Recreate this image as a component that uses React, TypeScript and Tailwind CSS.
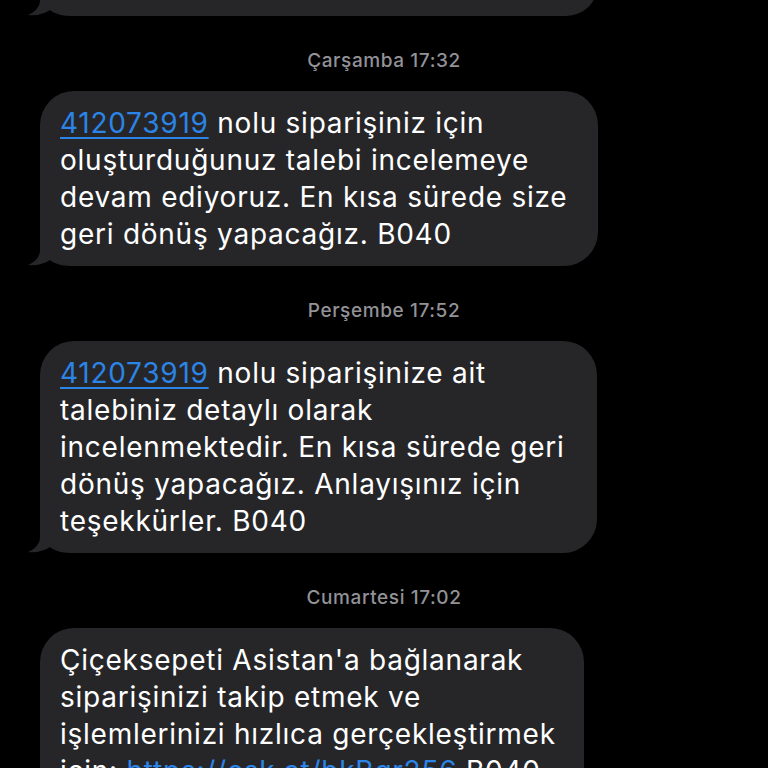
import React from 'react';

const Tail = () => (
  <svg
    className="absolute left-[-12px] bottom-0"
    width="48"
    height="40"
    viewBox="0 0 48 40"
  >
    <path
      d="M12 0 L12 24 C12 31 7 36 0 39 C8 40 16 38 22 34 C28 39 36 40 48 40 L48 0 Z"
      fill="#262629"
    />
  </svg>
);

const Stamp = ({ day, time }: { day: string; time: string }) => (
  <div className="mt-[34px] mb-[19px] text-center text-[19px] font-medium leading-[22px] tracking-[0.6px] text-[#929297]">
    {day} {time}
  </div>
);

const Bubble = ({
  width,
  lines,
  tail = true,
}: {
  width: string;
  lines: React.ReactNode[];
  tail?: boolean;
}) => (
  <div className={`relative ml-[40px] ${width}`}>
    {tail && <Tail />}
    <div className="relative rounded-[34px] bg-[#262629] pl-[20px] pr-[10px] pt-[14px] pb-[13px] text-[28px] leading-[37px] tracking-[0.75px] text-white">
      {lines.map((l, i) => (
        <div key={i} className="whitespace-nowrap">
          {l}
        </div>
      ))}
    </div>
  </div>
);

const OrderLink = ({ children }: { children: React.ReactNode }) => (
  <span className="text-[#2b84e6] underline decoration-[#2b84e6] decoration-2 underline-offset-[4px]">
    {children}
  </span>
);

export default function App() {
  return (
    <div
      className="h-[768px] w-[768px] overflow-hidden bg-black"
      style={{ fontFamily: 'Inter, "Noto Sans", sans-serif' }}
    >
      <div className="mt-[-48px] flex flex-col">
        <Bubble width="w-[558px]" lines={['şimdiden teşekkür ederiz.']} />

        <Stamp day="Çarşamba" time="17:32" />
        <Bubble
          width="w-[558px]"
          lines={[
            <>
              <OrderLink>412073919</OrderLink> nolu siparişiniz için
            </>,
            'oluşturduğunuz talebi incelemeye',
            'devam ediyoruz. En kısa sürede size',
            'geri dönüş yapacağız. B040',
          ]}
        />

        <Stamp day="Perşembe" time="17:52" />
        <Bubble
          width="w-[557px]"
          lines={[
            <>
              <OrderLink>412073919</OrderLink> nolu siparişinize ait
            </>,
            'talebiniz detaylı olarak',
            'incelenmektedir. En kısa sürede geri',
            'dönüş yapacağız. Anlayışınız için',
            'teşekkürler. B040',
          ]}
        />

        <Stamp day="Cumartesi" time="17:02" />
        <Bubble
          width="w-[544px]"
          tail={false}
          lines={[
            "Çiçeksepeti Asistan'a bağlanarak",
            'siparişinizi takip etmek ve',
            'işlemlerinizi hızlıca gerçekleştirmek',
            <>
              için: <OrderLink>https://csk.at/bkBqr256</OrderLink> B040
            </>,
          ]}
        />
      </div>
    </div>
  );
}
